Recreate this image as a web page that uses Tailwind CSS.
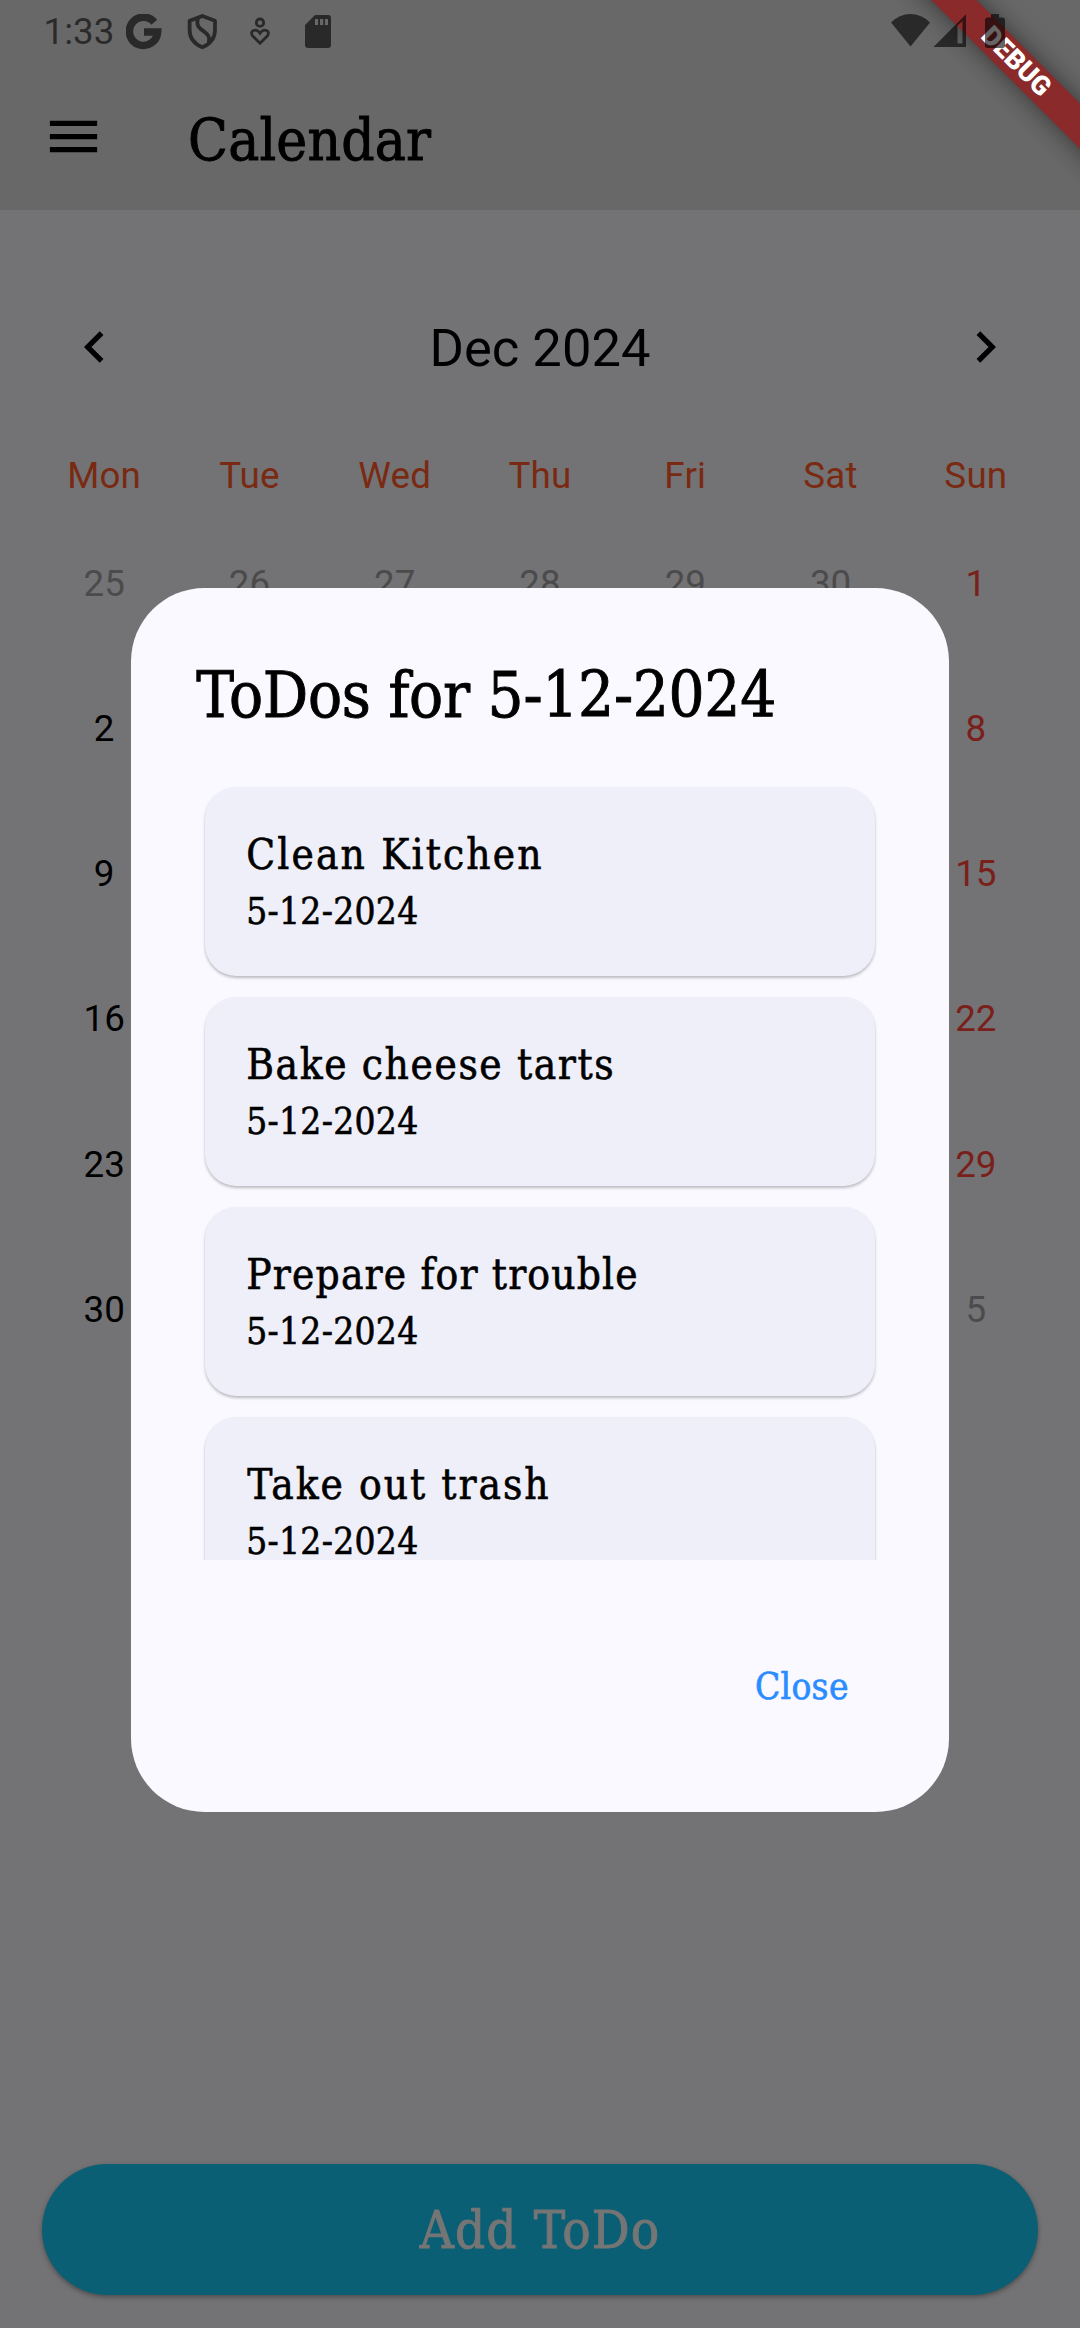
<!DOCTYPE html>
<html lang="en">
<head>
<meta charset="utf-8">
<title>Calendar</title>
<script src="https://cdn.jsdelivr.net/npm/@tailwindcss/browser@4"></script>
</head>
<body class="relative h-[2328px] w-[1080px] overflow-hidden bg-[#737375] font-[Roboto,sans-serif] text-black">

<!-- App bar -->
<header class="h-[210px] bg-[#686868]">
  <div class="h-[63px]"></div>
  <div class="flex h-[147px] items-center pl-[42px]">
    <svg class="size-[63px]" viewBox="0 0 24 24"><path d="M3 18h18v-2H3v2zm0-5h18v-2H3v2zm0-7v2h18V6H3z"/></svg>
    <h1 class="ml-[83px] pt-[7px] font-['DejaVu_Serif_Condensed','DejaVu_Serif',serif] text-[58px] leading-[64px] tracking-[0.2px] [-webkit-text-stroke:0.9px]">Calendar</h1>
  </div>
</header>

<!-- Month calendar -->
<main class="px-[31.5px]">
  <div class="flex h-[276px] items-center justify-between px-[31.5px]">
    <svg class="size-[63px] -translate-y-[1.5px]" viewBox="0 0 24 24"><path d="M15.41 7.41 14 6l-6 6 6 6 1.41-1.41L10.83 12z"/></svg>
    <h2 class="text-[52.5px] leading-[62px]">Dec 2024</h2>
    <svg class="size-[63px] -translate-y-[1.5px]" viewBox="0 0 24 24"><path d="M10 6 8.59 7.41 13.17 12l-4.58 4.59L10 18l6-6z"/></svg>
  </div>
  <div class="-mt-[33px] grid h-[45px] grid-cols-7 text-center text-[36.75px] leading-[45px] tracking-[0.2px] text-[#7a2a12]">
    <span>Mon</span><span>Tue</span><span>Wed</span><span>Thu</span><span>Fri</span><span>Sat</span><span>Sun</span>
  </div>
  <div class="mt-[12.500px] grid auto-rows-[145.3px] grid-cols-7 text-center text-[36.75px] leading-[146px]">
    <span class="text-[#4b4b4b]">25</span><span class="text-[#4b4b4b]">26</span><span class="text-[#4b4b4b]">27</span><span class="text-[#4b4b4b]">28</span><span class="text-[#4b4b4b]">29</span><span class="text-[#4b4b4b]">30</span><span class="text-[#7a201b]">1</span>
    <span>2</span><span class="invisible">3</span><span class="invisible">4</span><span class="invisible">5</span><span class="invisible">6</span><span class="invisible">7</span><span class="text-[#7a201b]">8</span>
    <span>9</span><span class="invisible">10</span><span class="invisible">11</span><span class="invisible">12</span><span class="invisible">13</span><span class="invisible">14</span><span class="text-[#7a201b]">15</span>
    <span>16</span><span class="invisible">17</span><span class="invisible">18</span><span class="invisible">19</span><span class="invisible">20</span><span class="invisible">21</span><span class="text-[#7a201b]">22</span>
    <span>23</span><span class="invisible">24</span><span class="invisible">25</span><span class="invisible">26</span><span class="invisible">27</span><span class="invisible">28</span><span class="text-[#7a201b]">29</span>
    <span>30</span><span class="invisible">31</span><span class="invisible">1</span><span class="invisible">2</span><span class="invisible">3</span><span class="invisible">4</span><span class="text-[#4b4b4b]">5</span>
  </div>
</main>

<footer class="px-[42px] pt-[781.5px]">
  <button class="h-[131px] w-full rounded-full bg-[#0b5f75] pt-[2px] font-['DejaVu_Serif_Condensed','DejaVu_Serif',serif] text-[52.5px] leading-[64px] tracking-[1.1px] text-[#757575] shadow-[0_2px_5px_rgba(0,0,0,0.35)] [-webkit-text-stroke:0.9px]">Add ToDo</button>
</footer>

<!-- Dialog -->
<section class="absolute top-[588px] left-[131.25px] flex h-[1224px] w-[817.5px] flex-col rounded-[73.5px] bg-[#faf9ff] px-[66px] pt-[76px] font-['DejaVu_Serif_Condensed','DejaVu_Serif',serif]">
  <h2 class="-ml-px text-[63px] leading-[64px] tracking-[-0.25px] whitespace-nowrap [-webkit-text-stroke:0.9px]">ToDos for 5-12-2024</h2>
  <ul class="mt-[49px] flex h-[783px] flex-col gap-[21px] overflow-hidden px-[8px] pt-[10px] [-webkit-text-stroke:0.6px]">
    <li class="h-[189px] shrink-0 rounded-[31.5px] bg-[#efeff9] pt-[39px] pl-[41px] shadow-[0_2px_3px_rgba(0,0,0,0.25)]">
      <p class="text-[42px] leading-[57px] tracking-[2.12px]">Clean Kitchen</p>
      <p class="text-[36.75px] leading-[57px] tracking-[0.3px]">5-12-2024</p>
    </li>
    <li class="h-[189px] shrink-0 rounded-[31.5px] bg-[#efeff9] pt-[39px] pl-[41px] shadow-[0_2px_3px_rgba(0,0,0,0.25)]">
      <p class="text-[42px] leading-[57px] tracking-[1.6px]">Bake cheese tarts</p>
      <p class="text-[36.75px] leading-[57px] tracking-[0.3px]">5-12-2024</p>
    </li>
    <li class="h-[189px] shrink-0 rounded-[31.5px] bg-[#efeff9] pt-[39px] pl-[41px] shadow-[0_2px_3px_rgba(0,0,0,0.25)]">
      <p class="text-[42px] leading-[57px] tracking-[1.15px]">Prepare for trouble</p>
      <p class="text-[36.75px] leading-[57px] tracking-[0.3px]">5-12-2024</p>
    </li>
    <li class="h-[189px] shrink-0 rounded-[31.5px] bg-[#efeff9] pt-[39px] pl-[41px] shadow-[0_2px_3px_rgba(0,0,0,0.25)]">
      <p class="pl-px text-[42px] leading-[57px] tracking-[2px]">Take out trash</p>
      <p class="text-[36.75px] leading-[57px] tracking-[0.3px]">5-12-2024</p>
    </li>
  </ul>
  <button class="mt-[96.5px] mr-[34px] self-end text-[36.75px] leading-[60px] tracking-[0.3px] text-[#2a8cff] [-webkit-text-stroke:0.6px]">Close</button>
</section>

<!-- Debug ribbon -->
<div class="absolute top-0 right-0 size-[240px] overflow-hidden">
  <div class="absolute top-[46px] left-[26px] flex h-[31.5px] w-[300px] rotate-45 items-center justify-center bg-[#8a2a2b] text-[26.8px] leading-none font-black text-white shadow-[0_0_26px_rgba(0,0,0,0.5)]">DEBUG</div>
</div>

<!-- System status bar, drawn over everything -->
<div class="absolute inset-x-0 top-0 flex h-[63px] text-black/60">
  <span class="ml-[43.5px] w-[82.5px] pt-[10px] text-[36.75px] leading-[44px]">1:33</span>
  <svg class="mt-[14px] h-[36px] w-[36px]" viewBox="126 14 36 36"><path d="M154.3 22.3A14.1 14.1 0 1 0 157.6 32H144" fill="none" stroke="currentColor" stroke-width="7.6"/></svg>
  <svg class="mt-[13px] ml-[25px] h-[38px] w-[31px]" viewBox="187 13 31 38" fill="none" stroke="currentColor" stroke-width="3.8" stroke-linejoin="round"><path d="M202.3 16 215 20.8V30C215 38.5 210 44 202.3 47.3 194.500 44 189.600 38.500 189.600 30V20.800ZM197.900 18.500C195.800 26.500 200 28.500 204 31.500 208.500 34.800 210 37 208.800 43"/></svg>
  <svg class="mt-[16px] ml-[31px] h-[31px] w-[22px]" viewBox="249 16 22 31" fill="none" stroke="currentColor" stroke-width="2.8"><circle cx="260" cy="22.700" r="3.700"/><path d="M260 43.300 252.700 36C248.800 31 256 27.300 260 33.200 264 27.300 271.200 31 267.300 36Z"/></svg>
  <svg class="mt-[15px] ml-[34px] h-[33px] w-[26px]" viewBox="305 15 26 33"><path fill="currentColor" fill-rule="evenodd" d="M315 15h13q3 0 3 3v27q0 3-3 3h-20q-3 0-3-3V25ZM315 19v6h3v-6ZM320 19v6h3.200v-6ZM325 19v6h3v-6Z"/></svg>
  <svg class="mt-[14px] ml-auto h-[33px] w-[40px]" viewBox="891 14 40 33"><path fill="currentColor" d="M910.500 46.500 891 22.500Q899.500 14 910.500 14T930 22.500Z"/></svg>
  <svg class="mt-[14px] ml-[2px] h-[34px] w-[34px]" viewBox="933 14 34 34"><path fill="currentColor" fill-rule="evenodd" d="M933.500 47 966 14.300V47ZM957.500 25.500V43.500H962.500V21Z"/></svg>
  <svg class="mt-[14px] mr-[75px] ml-[18px] h-[34px] w-[20px]" viewBox="985 14 20 34"><path fill="currentColor" d="M991 14h8v3.500h3.500q2.500 0 2.500 2.500v25.500q0 2.500-2.500 2.500h-15q-2.500 0-2.500-2.500V20q0-2.500 2.500-2.500h3.500Z"/></svg>
</div>
</body>
</html>
